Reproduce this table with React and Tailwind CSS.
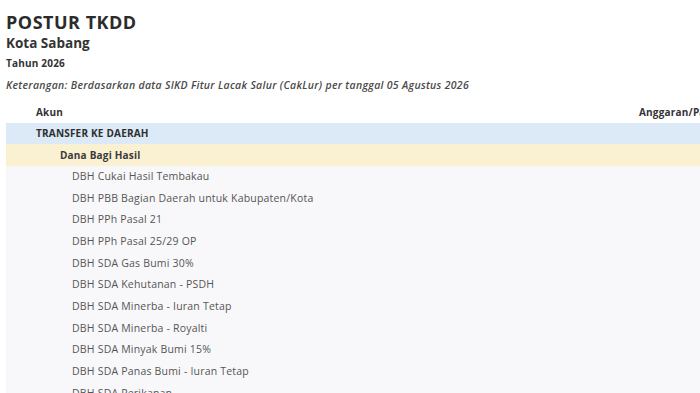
export default function App() {
  const items = [
    "DBH Cukai Hasil Tembakau",
    "DBH PBB Bagian Daerah untuk Kabupaten/Kota",
    "DBH PPh Pasal 21",
    "DBH PPh Pasal 25/29 OP",
    "DBH SDA Gas Bumi 30%",
    "DBH SDA Kehutanan - PSDH",
    "DBH SDA Minerba - Iuran Tetap",
    "DBH SDA Minerba - Royalti",
    "DBH SDA Minyak Bumi 15%",
    "DBH SDA Panas Bumi - Iuran Tetap",
    "DBH SDA Perikanan",
  ];
  return (
    <div className="w-[700px] h-[393px] overflow-hidden bg-white text-[#333]" style={{ fontFamily: '"Open Sans", sans-serif' }}>
      <div className="pl-[6px] pt-[11px]">
        <div className="text-[18px] font-bold leading-[22px] tracking-[0.5px] text-[#2b2b2b]">POSTUR TKDD</div>
        <div className="text-[13.5px] font-bold leading-[18px] mt-[1px] text-[#333]">Kota Sabang</div>
        <div className="text-[10px] font-bold leading-[14px] mt-[4px] tracking-[0.2px] text-[#333]">Tahun 2026</div>
        <div className="text-[10.5px] italic font-semibold leading-[14px] mt-[8px] tracking-[0.3px] text-[#4a4a4a]">
          Keterangan: Berdasarkan data SIKD Fitur Lacak Salur (CakLur) per tanggal 05 Agustus 2026
        </div>
      </div>
      <div className="w-[800px] ml-[6px] mt-[9px]">
        <div className="flex h-[22px] items-center text-[10px] font-bold tracking-[0.2px] text-[#333]">
          <div className="pl-[30px] flex-1">Akun</div>
          <div className="w-[167px]">Anggaran/Pagu</div>
        </div>
        <div className="h-[21px] flex items-center bg-[#dce9f6] pl-[30px] text-[10px] font-bold tracking-[0.2px] text-[#2f2f2f]">
          TRANSFER KE DAERAH
        </div>
        <div className="h-[22px] flex items-center bg-[#faf1d2] pl-[54px] text-[10px] font-bold tracking-[0.2px] text-[#3a3a3a]">
          Dana Bagi Hasil
        </div>
        {items.map((t) => (
          <div key={t} className="h-[21.7px] flex items-center bg-[#f8f8fa] pl-[66px] text-[10.5px] tracking-[0.2px] text-[#555]">
            {t}
          </div>
        ))}
      </div>
    </div>
  );
}
